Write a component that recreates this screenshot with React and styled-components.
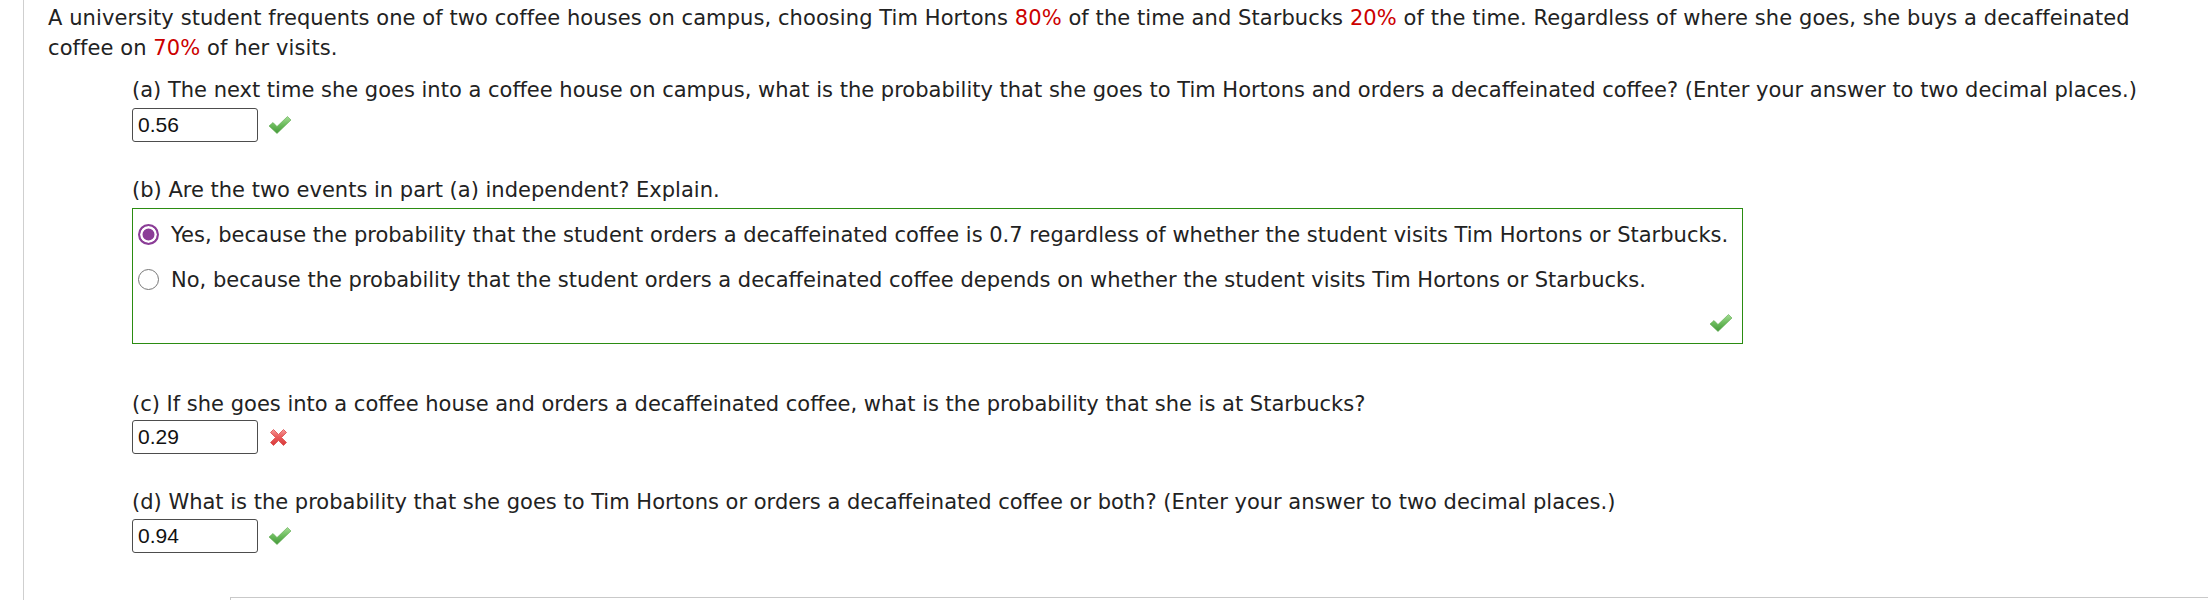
import React from "react";
import styled, { createGlobalStyle } from "styled-components";

const GlobalStyle = createGlobalStyle`
  html, body { margin: 0; padding: 0; background: #fff; }
  body {
    font-family: "DejaVu Sans", Verdana, sans-serif;
    color: #222;
  }
`;

const Page = styled.div`
  margin-left: 23px;
  border-left: 1px solid #cfcfcf;
  padding: 3px 60px 0 24px;
  min-height: 680px;
  font-size: 21px;
  line-height: 30px;
`;

const Intro = styled.p`
  margin: 0;
  letter-spacing: 0.08px;
`;

const Hi = styled.span`
  color: #cc0000;
`;

const Part = styled.section`
  margin-left: 84px;
  margin-top: ${(p) => p.$top}px;
`;

const Prompt = styled.div`
  margin-bottom: ${(p) => p.$gap}px;
`;

const AnswerRow = styled.div`
  display: flex;
  align-items: center;
  gap: 10px;
`;

const Answer = styled.input`
  box-sizing: border-box;
  width: 126px;
  height: 34px;
  margin: 0;
  border: 1px solid #4d4d4d;
  border-radius: 3px;
  padding: 0 5px;
  font: 21px "Liberation Sans", Arial, sans-serif;
  color: #111;
  background: #fff;
  outline: none;
`;

const ChoiceBox = styled.div`
  box-sizing: border-box;
  width: 1611px;
  border: 1px solid #2b8c12;
  padding: 11px 9px 10px 5px;
`;

const ChoiceList = styled.div`
  display: flex;
  flex-direction: column;
  gap: 15px;
`;

const Choice = styled.label`
  display: flex;
  align-items: flex-start;
  gap: 12px;
  height: 30px;
`;

const Radio = styled.span`
  box-sizing: border-box;
  flex: none;
  width: 21px;
  height: 21px;
  margin-top: 4px;
  border-radius: 50%;
  border: ${(p) => (p.$checked ? "2px solid #8b3d97" : "1.5px solid #777")};
  background: ${(p) => (p.$checked ? "#8b3d97" : "#fff")};
  box-shadow: ${(p) => (p.$checked ? "inset 0 0 0 2.5px #fff" : "none")};
`;

const BoxFooter = styled.div`
  display: flex;
  justify-content: flex-end;
  margin-top: 18px;
  height: 20px;
`;

const Tail = styled.div`
  margin: 44px -60px 0 182px;
  height: 60px;
  border: 1px solid #c9c9c9;
  border-right: none;
`;

const Check = () => (
  <svg width="24" height="20" viewBox="0 0 24 20" aria-hidden="true">
    <defs>
      <linearGradient id="cg" x1="0" y1="0" x2="0" y2="1">
        <stop offset="0" stopColor="#a3dc92" />
        <stop offset="0.5" stopColor="#6bbb5c" />
        <stop offset="1" stopColor="#45993a" />
      </linearGradient>
    </defs>
    <path
      d="M1 11 L5 7.5 L9 11.5 L19.5 1.5 L23 5 L9 18.5 Z"
      fill="url(#cg)"
      stroke="#5aa84c"
      strokeWidth="0.6"
      strokeLinejoin="round"
    />
  </svg>
);

const Cross = () => (
  <svg width="21" height="22" viewBox="0 0 21 22" aria-hidden="true">
    <defs>
      <linearGradient id="xg" x1="0" y1="0" x2="0" y2="1">
        <stop offset="0" stopColor="#f59a9a" />
        <stop offset="0.45" stopColor="#ea5b5b" />
        <stop offset="1" stopColor="#d83b3b" />
      </linearGradient>
    </defs>
    <path
      d="M2.5 5.5 L5.5 2.5 L10.5 7.5 L15.5 2.5 L18.5 5.5 L13.5 10.5 L18.5 15.5 L15.5 18.5 L10.5 13.5 L5.5 18.5 L2.5 15.5 L7.5 10.5 Z"
      fill="url(#xg)"
      stroke="#dd4a4a"
      strokeWidth="0.8"
      strokeLinejoin="round"
      transform="translate(0 1)"
    />
  </svg>
);

export default function App() {
  return (
    <>
      <GlobalStyle />
      <Page>
        <Intro>
          A university student frequents one of two coffee houses on campus, choosing Tim Hortons{" "}
          <Hi>80%</Hi> of the time and Starbucks <Hi>20%</Hi> of the time. Regardless of where she
          goes, she buys a decaffeinated coffee on <Hi>70%</Hi> of her visits.
        </Intro>

        <Part $top={12}>
          <Prompt $gap={3}>
            (a) The next time she goes into a coffee house on campus, what is the probability that she
            goes to Tim Hortons and orders a decaffeinated coffee? (Enter your answer to two decimal
            places.)
          </Prompt>
          <AnswerRow>
            <Answer readOnly defaultValue="0.56" />
            <Check />
          </AnswerRow>
        </Part>

        <Part $top={33}>
          <Prompt $gap={3}>(b) Are the two events in part (a) independent? Explain.</Prompt>
          <ChoiceBox>
            <ChoiceList>
              <Choice>
                <Radio $checked />
                Yes, because the probability that the student orders a decaffeinated coffee is 0.7
                regardless of whether the student visits Tim Hortons or Starbucks.
              </Choice>
              <Choice>
                <Radio />
                No, because the probability that the student orders a decaffeinated coffee depends on
                whether the student visits Tim Hortons or Starbucks.
              </Choice>
            </ChoiceList>
            <BoxFooter>
              <Check />
            </BoxFooter>
          </ChoiceBox>
        </Part>

        <Part $top={45}>
          <Prompt $gap={1}>
            (c) If she goes into a coffee house and orders a decaffeinated coffee, what is the
            probability that she is at Starbucks?
          </Prompt>
          <AnswerRow>
            <Answer readOnly defaultValue="0.29" />
            <Cross />
          </AnswerRow>
        </Part>

        <Part $top={33}>
          <Prompt $gap={2}>
            (d) What is the probability that she goes to Tim Hortons or orders a decaffeinated coffee
            or both? (Enter your answer to two decimal places.)
          </Prompt>
          <AnswerRow>
            <Answer readOnly defaultValue="0.94" />
            <Check />
          </AnswerRow>
        </Part>

        <Tail />
      </Page>
    </>
  );
}
